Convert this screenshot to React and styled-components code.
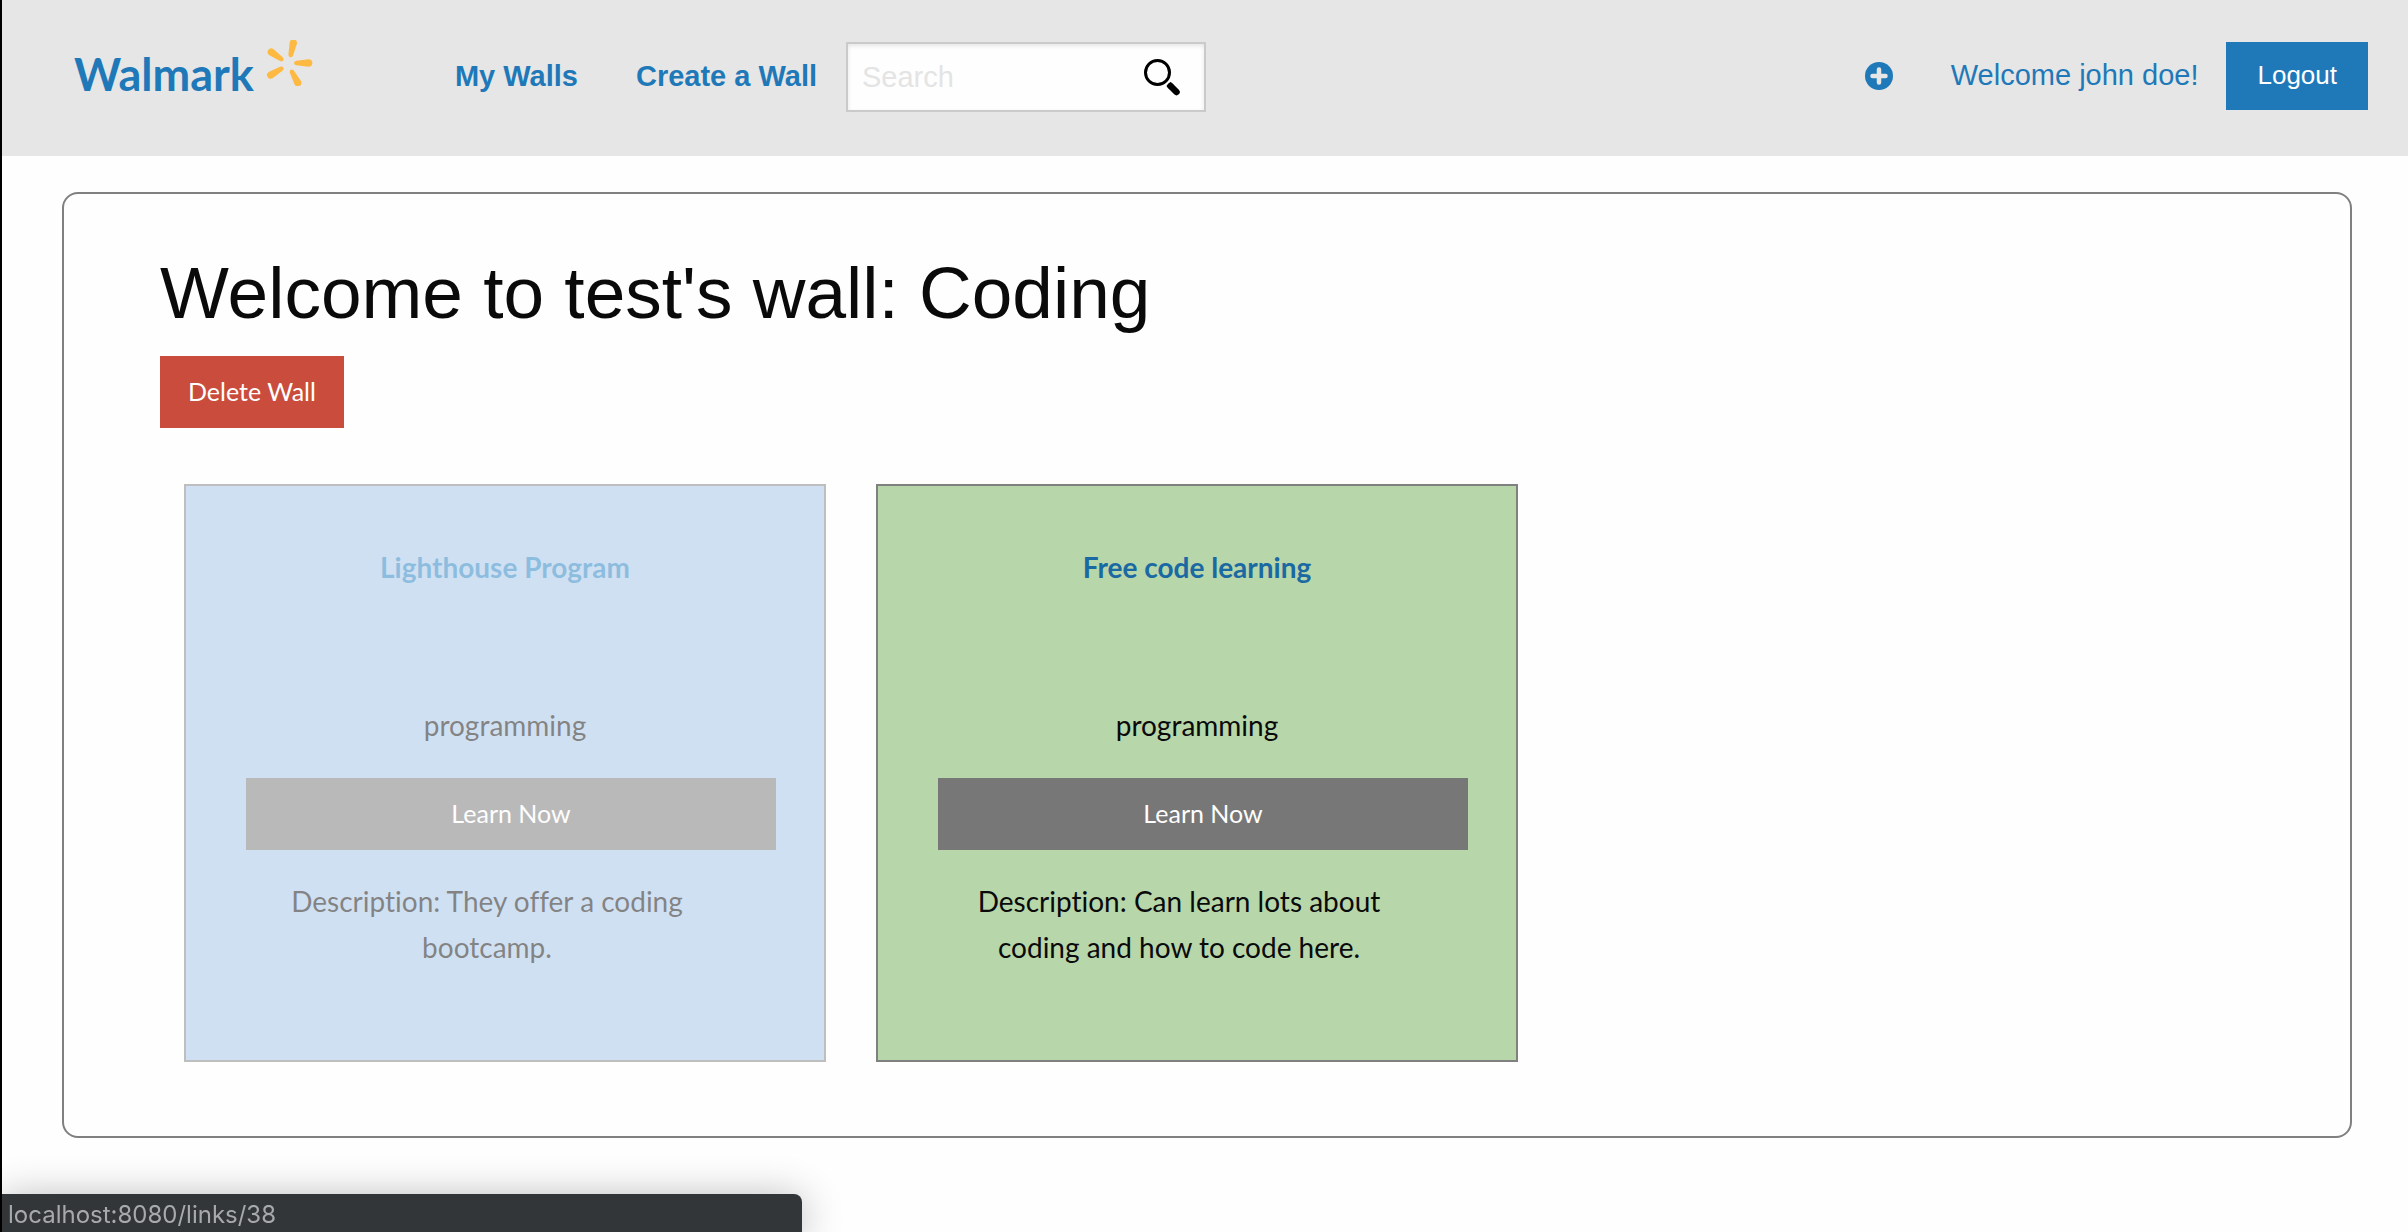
import React from "react";
import styled, { createGlobalStyle } from "styled-components";

const sans = `"Liberation Sans", Arial, Helvetica, sans-serif`;
const humanist = `Lato, "Noto Sans", sans-serif`;
const blue = "#1f79b8";

const GlobalStyle = createGlobalStyle`
  *, *::before, *::after { box-sizing: border-box; }
  body {
    margin: 0;
    min-height: 100vh;
    background: #fefefe;
    color: #0a0a0a;
    border-left: 2px solid #000;
    font-family: ${humanist};
    font-size: 28px;
    font-variant-ligatures: none;
    line-height: 46px;
  }
`;

const Header = styled.header`
  display: flex;
  align-items: flex-start;
  justify-content: space-between;
  padding: 42px 40px 44px 72px;
  background: #e6e6e6;
`;

const HeaderGroup = styled.div`
  display: flex;
  align-items: center;
`;

const Logo = styled.a`
  display: flex;
  align-items: flex-start;
  gap: 12px;
  margin-right: 142px;
  padding-bottom: 6px;
  color: ${blue};
  font-size: 45px;
  font-weight: 700;
  line-height: 64px;
  text-decoration: none;

  svg { margin-top: -2px; }
`;

const Nav = styled.nav`
  display: flex;
  gap: 58px;
  margin-right: 29px;
`;

const NavLink = styled.a`
  padding-bottom: 2px;
  color: ${blue};
  font-family: ${sans};
  font-size: 29px;
  font-weight: ${(p) => (p.$strong ? 700 : 400)};
  text-decoration: none;
`;

const SearchBox = styled.form`
  display: flex;
  align-items: center;
  width: 360px;
  height: 70px;
  padding: 0 24px 0 14px;
  background: #fefefe;
  border: 2px solid #cacaca;
  box-shadow: inset 0 2px 4px rgba(10, 10, 10, 0.1);
`;

const SearchInput = styled.input`
  flex: 1;
  min-width: 0;
  padding: 0;
  border: 0;
  outline: 0;
  background: transparent;
  font-family: ${sans};
  font-size: 29px;

  &::placeholder { color: #e4e4e4; opacity: 1; }
`;

const IconButton = styled.button`
  display: flex;
  padding: 0;
  border: 0;
  background: transparent;
  color: ${(p) => p.$color};
`;

const Account = styled(HeaderGroup)`
  & > button:first-child { margin-right: 58px; }
  & > a { margin-right: 28px; }
`;

const Button = styled.button`
  display: block;
  height: ${(p) => (p.$compact ? 68 : 72)}px;
  padding: 0 ${(p) => (p.$compact ? 31 : 28)}px 2px;
  border: 0;
  border-radius: 0;
  background: ${(p) => p.$bg};
  color: #fefefe;
  font-family: ${(p) => (p.$compact ? sans : humanist)};
  font-size: ${(p) => (p.$compact ? 26 : 25)}px;
`;

const Wall = styled.main`
  margin: 36px 56px 0 60px;
  padding: 52px 96px 74px;
  border: 2px solid #808080;
  border-radius: 16px;
`;

const Title = styled.h1`
  margin: 0 0 16px;
  font-family: ${sans};
  font-size: 73px;
  font-weight: 400;
  line-height: 94px;
`;

const Cards = styled.section`
  display: flex;
  flex-wrap: wrap;
  gap: 50px;
  margin: 56px 24px 0;
`;

const Card = styled.article`
  width: 642px;
  padding: 58px 48px 90px 60px;
  border: 2px solid #808080;
  background: ${(p) => p.$bg};
  opacity: ${(p) => (p.$hovered ? 0.5 : 1)};

  & > button { width: 100%; }
`;

const CardTitle = styled.h2`
  margin: 0 12px 112px 0;
  font-size: 28px;
  line-height: 46px;
  text-align: center;

  a { color: ${(p) => p.$color}; text-decoration: none; }
`;

const Category = styled.p`
  margin: 0 12px 30px 0;
  text-align: center;
`;

const Description = styled.p`
  margin: 28px 78px 0 30px;
  text-align: center;
`;

const StatusBar = styled.div`
  position: fixed;
  left: 2px;
  bottom: 0;
  width: 800px;
  height: 38px;
  padding-left: 6px;
  border-top-right-radius: 8px;
  background: #323639;
  color: #a8a9aa;
  box-shadow: 0 4px 40px rgba(0, 0, 0, 0.3);
  font-family: Inter, sans-serif;
  font-size: 24px;
  line-height: 42px;
`;

const petals = [
  [133, 129, 0],
  [121, 111, -78],
  [99, 121, -145],
  [99, 143, 149],
  [123, 150, 62],
];

const Spark = () => (
  <svg width="47" height="46" viewBox="48 60 141 138" fill="#fdb942" aria-hidden="true">
    {petals.map(([x, y, angle]) => (
      <path
        key={angle}
        transform={`translate(${x} ${y}) rotate(${angle})`}
        d="M6-7 L42-11 Q54-11 54 0 Q54 11 42 11 L6 7 Q-1 5-1 0 Q-1-5 6-7Z"
      />
    ))}
  </svg>
);

const SearchIcon = () => (
  <svg width="36" height="37" viewBox="0 0 36 37" fill="none" stroke="currentColor" aria-hidden="true">
    <circle cx="13.5" cy="13.5" r="12" strokeWidth="3" />
    <path d="M26.5 27 L32.5 33" strokeWidth="6.5" strokeLinecap="round" />
    <path d="M24.5 25 L28 28.5" strokeWidth="6" />
  </svg>
);

const PlusIcon = () => (
  <svg width="28" height="28" viewBox="0 0 28 28" aria-hidden="true">
    <circle cx="14" cy="14" r="14" fill="currentColor" />
    <path d="M14 7.5V20.5M7.5 14H20.5" stroke="#e6e6e6" strokeWidth="4.5" strokeLinecap="round" />
  </svg>
);

const links = [
  {
    title: "Lighthouse Program",
    category: "programming",
    description: "Description: They offer a coding bootcamp.",
    bg: "#a4c4e9",
    color: "#1f7ebf",
    hovered: true,
  },
  {
    title: "Free code learning",
    category: "programming",
    description: "Description: Can learn lots about coding and how to code here.",
    bg: "#b7d6aa",
    color: "#1a69a2",
  },
];

export default function App() {
  return (
    <>
      <GlobalStyle />
      <Header>
        <HeaderGroup>
          <Logo href="#">
            Walmark
            <Spark />
          </Logo>
          <Nav>
            <NavLink $strong href="#walls">My Walls</NavLink>
            <NavLink $strong href="#create">Create a Wall</NavLink>
          </Nav>
          <SearchBox>
            <SearchInput type="search" placeholder="Search" aria-label="Search" />
            <IconButton type="button" $color="#000" aria-label="Submit search">
              <SearchIcon />
            </IconButton>
          </SearchBox>
        </HeaderGroup>
        <Account>
          <IconButton type="button" $color={blue} aria-label="Add link">
            <PlusIcon />
          </IconButton>
          <NavLink href="#profile">Welcome john doe!</NavLink>
          <Button $compact $bg={blue}>Logout</Button>
        </Account>
      </Header>
      <Wall>
        <Title>Welcome to test's wall: Coding</Title>
        <Button $bg="#c94c3c">Delete Wall</Button>
        <Cards>
          {links.map((link) => (
            <Card key={link.title} $bg={link.bg} $hovered={link.hovered}>
              <CardTitle $color={link.color}>
                <a href="#link">{link.title}</a>
              </CardTitle>
              <Category>{link.category}</Category>
              <Button $bg="#777">Learn Now</Button>
              <Description>{link.description}</Description>
            </Card>
          ))}
        </Cards>
      </Wall>
      <StatusBar>localhost:8080/links/38</StatusBar>
    </>
  );
}
